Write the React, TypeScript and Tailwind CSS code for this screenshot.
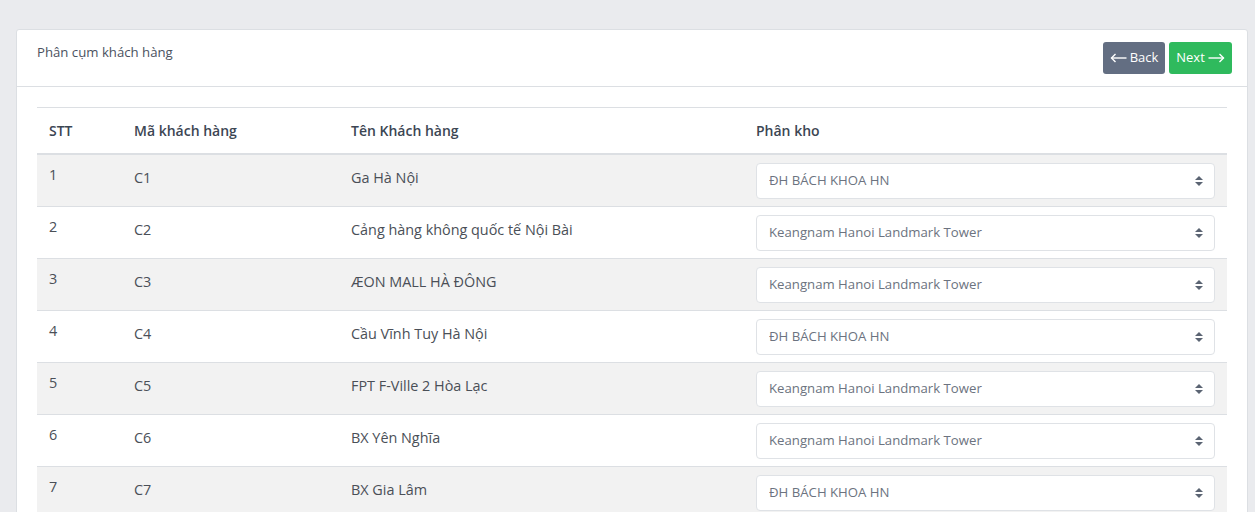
const ROWS = [
  { stt: 1, code: 'C1', name: 'Ga Hà Nội', kho: 'ĐH BÁCH KHOA HN' },
  { stt: 2, code: 'C2', name: 'Cảng hàng không quốc tế Nội Bài', kho: 'Keangnam Hanoi Landmark Tower' },
  { stt: 3, code: 'C3', name: 'ÆON MALL HÀ ĐÔNG', kho: 'Keangnam Hanoi Landmark Tower' },
  { stt: 4, code: 'C4', name: 'Cầu Vĩnh Tuy Hà Nội', kho: 'ĐH BÁCH KHOA HN' },
  { stt: 5, code: 'C5', name: 'FPT F-Ville 2 Hòa Lạc', kho: 'Keangnam Hanoi Landmark Tower' },
  { stt: 6, code: 'C6', name: 'BX Yên Nghĩa', kho: 'Keangnam Hanoi Landmark Tower' },
  { stt: 7, code: 'C7', name: 'BX Gia Lâm', kho: 'ĐH BÁCH KHOA HN' },
]

const KHO = ['ĐH BÁCH KHOA HN', 'Keangnam Hanoi Landmark Tower']

function LongArrow({ dir }: { dir: 'left' | 'right' }) {
  return (
    <svg width="17" height="10" viewBox="0 0 17 10" fill="none" stroke="currentColor" strokeWidth="1.4" aria-hidden>
      {dir === 'left' ? (
        <>
          <path d="M1.5 5 H16.5" />
          <path d="M5.5 1 L1.5 5 L5.5 9" />
        </>
      ) : (
        <>
          <path d="M0.5 5 H15.5" />
          <path d="M11.5 1 L15.5 5 L11.5 9" />
        </>
      )}
    </svg>
  )
}

function KhoSelect({ value }: { value: string }) {
  return (
    <div className="relative">
      <select
        defaultValue={value}
        className="h-[36px] w-full appearance-none rounded-[4px] border border-[#dfe2e6] bg-white pl-3 pr-8 text-[13.2px] text-[#6c7380] outline-none"
      >
        {KHO.map((k) => (
          <option key={k}>{k}</option>
        ))}
      </select>
      <svg
        className="pointer-events-none absolute right-[12px] top-1/2 -translate-y-1/2"
        width="8"
        height="10"
        viewBox="0 0 8 10"
        aria-hidden
      >
        <path d="M4 0 L8 4 H0 Z" fill="#5b6473" />
        <path d="M4 10 L8 6 H0 Z" fill="#5b6473" />
      </svg>
    </div>
  )
}

export default function App() {
  return (
    <div className="min-h-[512px] bg-[#eaebee] pl-4 pr-[7px] pt-[29px] font-['Open_Sans',sans-serif] text-[14.4px] text-[#4a4f57]">
      <div className="rounded-[3px] border border-[#dcdfe3] bg-white">
        <div className="flex h-[57px] items-start justify-between border-b border-[#dcdfe3] pl-5 pr-[15px]">
          <h1 className="pt-[13px] text-[13.2px] font-normal text-[#4b5260]">Phân cụm khách hàng</h1>
          <div className="flex gap-1 pt-3">
            <button className="flex h-[32px] w-[62px] items-center justify-center gap-[3px] rounded-[3px] bg-[#636e82] text-[13px] text-white">
              <LongArrow dir="left" />
              Back
            </button>
            <button className="flex h-[32px] w-[63px] items-center justify-center gap-[3px] rounded-[3px] bg-[#2fba5d] text-[13px] text-white">
              Next
              <LongArrow dir="right" />
            </button>
          </div>
        </div>
        <div className="px-5 pt-5">
          <table className="w-full table-fixed border-collapse">
            <colgroup>
              <col className="w-[85px]" />
              <col className="w-[217px]" />
              <col className="w-[405px]" />
              <col />
            </colgroup>
            <thead>
              <tr className="h-[46px] border-t border-b-2 border-[#dcdfe3] text-left text-[14px]">
                <th className="px-3 font-semibold text-[#3c4653]">STT</th>
                <th className="px-3 font-semibold text-[#3c4653]">Mã khách hàng</th>
                <th className="px-3 font-semibold text-[#3c4653]">Tên Khách hàng</th>
                <th className="px-3 font-semibold text-[#3c4653]">Phân kho</th>
              </tr>
            </thead>
            <tbody>
              {ROWS.map((r, i) => (
                <tr key={r.stt} className={`border-b border-[#dcdfe3] ${i % 2 === 0 ? 'bg-[#f2f2f2]' : 'bg-white'}`}>
                  <td className="px-3 pt-[9px] align-top">{r.stt}</td>
                  <td className="px-3 pb-[4px] align-middle">{r.code}</td>
                  <td className="px-3 pb-[4px] align-middle">{r.name}</td>
                  <td className="px-3 pb-[7px] pt-2 align-middle">
                    <KhoSelect value={r.kho} />
                  </td>
                </tr>
              ))}
            </tbody>
          </table>
        </div>
      </div>
    </div>
  )
}
